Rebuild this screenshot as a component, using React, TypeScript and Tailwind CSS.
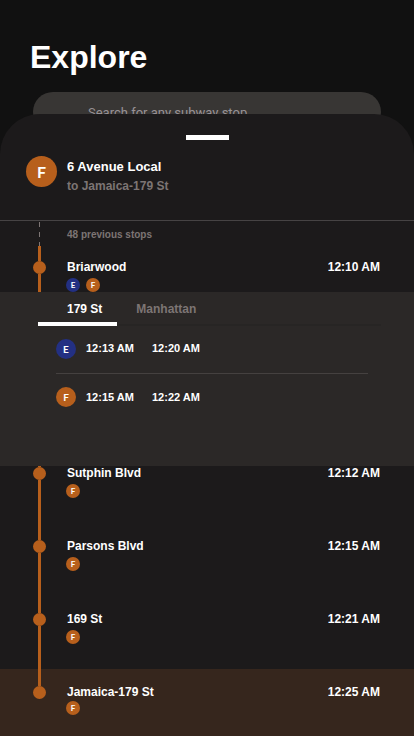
import { useState } from 'react';
import { clsx } from 'clsx';

type Line = 'E' | 'F';

const lineColors: Record<Line, string> = {
  E: 'bg-[#233083]',
  F: 'bg-[#b75f1c]',
};

const badgeSizes = {
  sm: 'size-3.5 text-[8px]',
  md: 'size-5 text-[10px]',
  lg: 'size-[31px] text-base',
};

const stops: { name: string; time: string; lines: Line[] }[] = [
  { name: 'Briarwood', time: '12:10 AM', lines: ['E', 'F'] },
  { name: 'Sutphin Blvd', time: '12:12 AM', lines: ['F'] },
  { name: 'Parsons Blvd', time: '12:15 AM', lines: ['F'] },
  { name: '169 St', time: '12:21 AM', lines: ['F'] },
  { name: 'Jamaica-179 St', time: '12:25 AM', lines: ['F'] },
];

const arrivals: { line: Line; times: string[] }[] = [
  { line: 'E', times: ['12:13 AM', '12:20 AM'] },
  { line: 'F', times: ['12:15 AM', '12:22 AM'] },
];

const directions = ['179 St', 'Manhattan'];

const LineBadge = ({ line, size }: { line: Line; size: keyof typeof badgeSizes }) => (
  <span
    className={clsx(
      "flex shrink-0 items-center justify-center rounded-full font-['Lato',sans-serif] leading-none font-bold",
      lineColors[line],
      badgeSizes[size]
    )}
  >
    {line}
  </span>
);

// Expanded arrivals for the selected stop, slightly overlapping the next row
const ArrivalsPanel = () => {
  const [active, setActive] = useState(directions[0]);

  return (
    <div className="relative z-10 -mb-4 h-[174px] bg-[#2b2827]">
      <div className="mr-[33px] ml-[38px] flex h-[34px] border-b-2 border-[#272524]">
        {directions.map((direction) => (
          <button
            key={direction}
            type="button"
            onClick={() => setActive(direction)}
            className={clsx(
              'h-[34px] border-b-4 pt-1 pr-[15px] text-left text-xs font-bold first:pl-[29px] last:pl-[19px]',
              active === direction ? 'border-white text-white' : 'border-transparent text-[#7d7574]'
            )}
          >
            {direction}
          </button>
        ))}
      </div>
      <ul className="mr-[46px] ml-14 divide-y divide-[#454140]">
        {arrivals.map(({ line, times }) => (
          <li key={line} className="flex h-12 items-center pb-0.5 text-[11px] font-bold">
            <LineBadge line={line} size="md" />
            {times.map((time) => (
              <span key={time} className="ml-[10px] w-14">
                {time}
              </span>
            ))}
          </li>
        ))}
      </ul>
    </div>
  );
};

const App = () => {
  return (
    <div className="flex min-h-screen flex-col bg-[#111111] font-['Liberation_Sans',Arial,sans-serif] text-white">
      <header className="pt-9">
        <h1 className="pl-[30px] text-[32px] leading-[42px] font-bold">Explore</h1>
        <input
          type="search"
          aria-label="Search for any subway stop"
          placeholder="Search for any subway stop"
          className="mx-[33px] mt-[14px] block h-10 w-[calc(100%-66px)] rounded-full bg-[#383634] pr-6 pl-[55px] font-['Roboto',sans-serif] text-[13px] outline-none placeholder:text-[#989296]"
        />
      </header>

      <main className="relative -mt-[18px] flex flex-1 flex-col overflow-hidden rounded-t-[40px] bg-[#1c1a1b]">
        <button type="button" aria-label="Drag to resize" className="mx-auto mt-[21px] h-[5px] w-[43px] bg-white" />

        <div className="flex h-[81px] items-start gap-[10px] border-b border-[#464344] pt-4 pl-[26px]">
          <LineBadge line="F" size="lg" />
          <div className="pt-px">
            <h2 className="text-[13px] leading-5 font-bold">6 Avenue Local</h2>
            <p className="text-xs leading-[18px] font-bold text-[#7d7574]">to Jamaica-179 St</p>
          </div>
        </div>

        <div className="flex h-[25px] items-center">
          <div className="ml-[39px] h-full w-px bg-[repeating-linear-gradient(to_bottom,transparent_0_1px,#7d7574_1px_6px,transparent_6px_10px)]" />
          <button type="button" className="ml-[27px] pt-0.5 text-[10px] font-bold text-[#7d7574]">
            48 previous stops
          </button>
        </div>

        <ol className="flex flex-1 flex-col">
          {stops.map((stop, i) => {
            const first = i === 0;
            const last = i === stops.length - 1;

            return (
              <li key={stop.name} className={clsx(last && 'flex-1 bg-[#36261d]')}>
                <div className={clsx('flex pl-[33px]', first ? 'h-[46px]' : last ? 'h-[67px]' : 'h-[73px]')}>
                  {/* Track */}
                  <div className="flex w-[13px] flex-col items-center">
                    <div className={clsx('w-[3px] bg-[#b75f1c]', first ? 'h-[15px]' : 'h-[17px]')} />
                    <div className="size-[13px] rounded-full bg-[#b75f1c]" />
                    {!last && <div className="w-[3px] flex-1 bg-[#b75f1c]" />}
                  </div>
                  <div className={clsx('ml-5 flex-1', first ? 'pt-3' : 'pt-3.5')}>
                    <div className="flex justify-between pr-[34px] pl-px text-xs leading-[18px] font-bold">
                      <span>{stop.name}</span>
                      <time>{stop.time}</time>
                    </div>
                    <div className={clsx('flex gap-1.5', !last && 'mt-0.5')}>
                      {stop.lines.map((line) => (
                        <LineBadge key={line} line={line} size="sm" />
                      ))}
                    </div>
                  </div>
                </div>
                {first && <ArrivalsPanel />}
              </li>
            );
          })}
        </ol>
      </main>
    </div>
  );
};

export default App;
